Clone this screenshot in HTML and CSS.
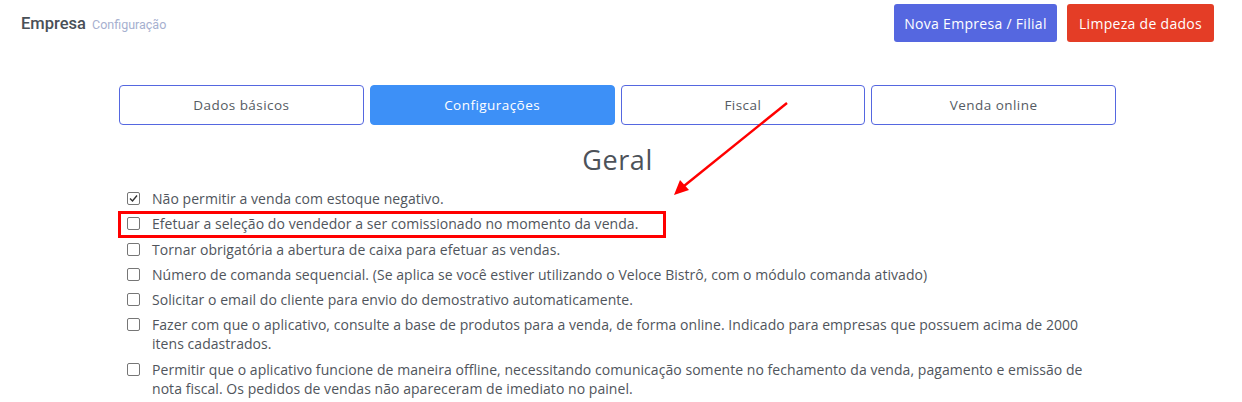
FILE: index.html
```html
<!DOCTYPE html>
<html lang="pt-BR">
<head>
    <meta charset="UTF-8">
    <meta name="viewport" content="width=device-width, initial-scale=1.0">
    <title>Empresa - Configuração</title>
    <link rel="stylesheet" href="styles.css">
</head>
<body>
    <header class="topbar">
        <div class="page-title">
            <span class="title">Empresa</span>
            <span class="crumb">Configuração</span>
        </div>
        <div class="actions">
            <button class="btn btn-primary">Nova Empresa / Filial</button>
            <button class="btn btn-danger">Limpeza de dados</button>
        </div>
    </header>

    <main class="content">
        <nav class="tabs">
            <button class="tab">Dados básicos</button>
            <button class="tab active">Configurações</button>
            <button class="tab">Fiscal</button>
            <button class="tab">Venda online</button>
        </nav>

        <h2 class="section-title">Geral</h2>

        <ul class="options">
            <li><span class="check checked"><svg viewBox="0 0 13 13" width="13" height="13"><path d="M3 6.5 L5.5 9 L10 3.5" fill="none" stroke="#333" stroke-width="1.4"/></svg></span><span class="label">Não permitir a venda com estoque negativo.</span></li>
            <li><span class="check"></span><span class="label">Efetuar a seleção do vendedor a ser comissionado no momento da venda.</span></li>
            <li><span class="check"></span><span class="label">Tornar obrigatória a abertura de caixa para efetuar as vendas.</span></li>
            <li><span class="check"></span><span class="label">Número de comanda sequencial. (Se aplica se você estiver utilizando o Veloce Bistrô, com o módulo comanda ativado)</span></li>
            <li><span class="check"></span><span class="label">Solicitar o email do cliente para envio do demostrativo automaticamente.</span></li>
            <li><span class="check"></span><span class="label">Fazer com que o aplicativo, consulte a base de produtos para a venda, de forma online. Indicado para empresas que possuem acima de 2000 itens cadastrados.</span></li>
            <li><span class="check"></span><span class="label">Permitir que o aplicativo funcione de maneira offline, necessitando comunicação somente no fechamento da venda, pagamento e emissão de nota fiscal. Os pedidos de vendas não apareceram de imediato no painel.</span></li>
        </ul>
    </main>

    <!-- anotação do print -->
    <svg class="markup" width="1242" height="402" viewBox="0 0 1242 402">
        <rect x="119.5" y="212.5" width="545" height="24" fill="none" stroke="#f00" stroke-width="3"/>
        <line x1="787" y1="103" x2="684" y2="186" stroke="#f00" stroke-width="2.4"/>
        <polygon points="674,195 680,180 689,190" fill="#f00"/>
    </svg>
</body>
</html>
```

FILE: styles.css
```css
body {
    margin: 0;
    background: #fff;
    font-family: "Open Sans", Arial, sans-serif;
    color: #495057;
}

.topbar {
    display: flex;
    justify-content: space-between;
    align-items: center;
    height: 46px;
    padding: 0 28px 0 21px;
}
.page-title .title {
    font-family: Roboto, Arial, sans-serif;
    font-size: 16.5px;
    font-weight: 500;
    color: #495057;
}
.page-title .crumb {
    font-family: Roboto, Arial, sans-serif;
    font-size: 12.5px;
    color: #a6b0cf;
    margin-left: 2px;
}
.actions {
    display: flex;
    gap: 10px;
}
.btn {
    height: 38px;
    border: none;
    border-radius: 3px;
    color: #fff;
    font-family: "Open Sans", Arial, sans-serif;
    font-size: 14px;
    font-weight: 500;
    letter-spacing: 0.3px;
    white-space: nowrap;
    padding: 0;
}
.btn-primary {
    background: #5567e0;
    width: 163px;
}
.btn-danger {
    background: #e43d26;
    width: 147px;
}

.content {
    width: 997px;
    margin: 39px 0 0 119px;
}
.tabs {
    display: grid;
    grid-template-columns: repeat(4, 1fr);
    gap: 6px;
}
.tab {
    height: 40px;
    background: #fff;
    border: 1px solid #5567e0;
    border-radius: 4px;
    font-family: "Open Sans", Arial, sans-serif;
    font-size: 13.5px;
    letter-spacing: 0.45px;
    color: #555b63;
}
.tab.active {
    background: #3d90f7;
    border-color: #3d90f7;
    color: #fff;
}

.section-title {
    text-align: center;
    font-size: 27px;
    font-weight: 500;
    letter-spacing: 0.6px;
    margin: 19px 0 13px;
    line-height: 32px;
    color: #4d5259;
}

.options {
    list-style: none;
    margin: 0;
    padding: 0 0 0 8px;
}
.options li {
    display: flex;
    align-items: flex-start;
    margin-bottom: 6.3px;
    font-size: 14px;
    letter-spacing: 0.05px;
    line-height: 19px;
    color: #50555c;
}
.check {
    flex: none;
    width: 11px;
    height: 11px;
    border: 1px solid #767676;
    border-radius: 2px;
    margin: 3px 12px 0 0;
    position: relative;
}
.check svg {
    position: absolute;
    left: -1px;
    top: -1px;
}
.label {
    max-width: 945px;
}

.markup {
    position: absolute;
    left: 0;
    top: 0;
    pointer-events: none;
}
```
